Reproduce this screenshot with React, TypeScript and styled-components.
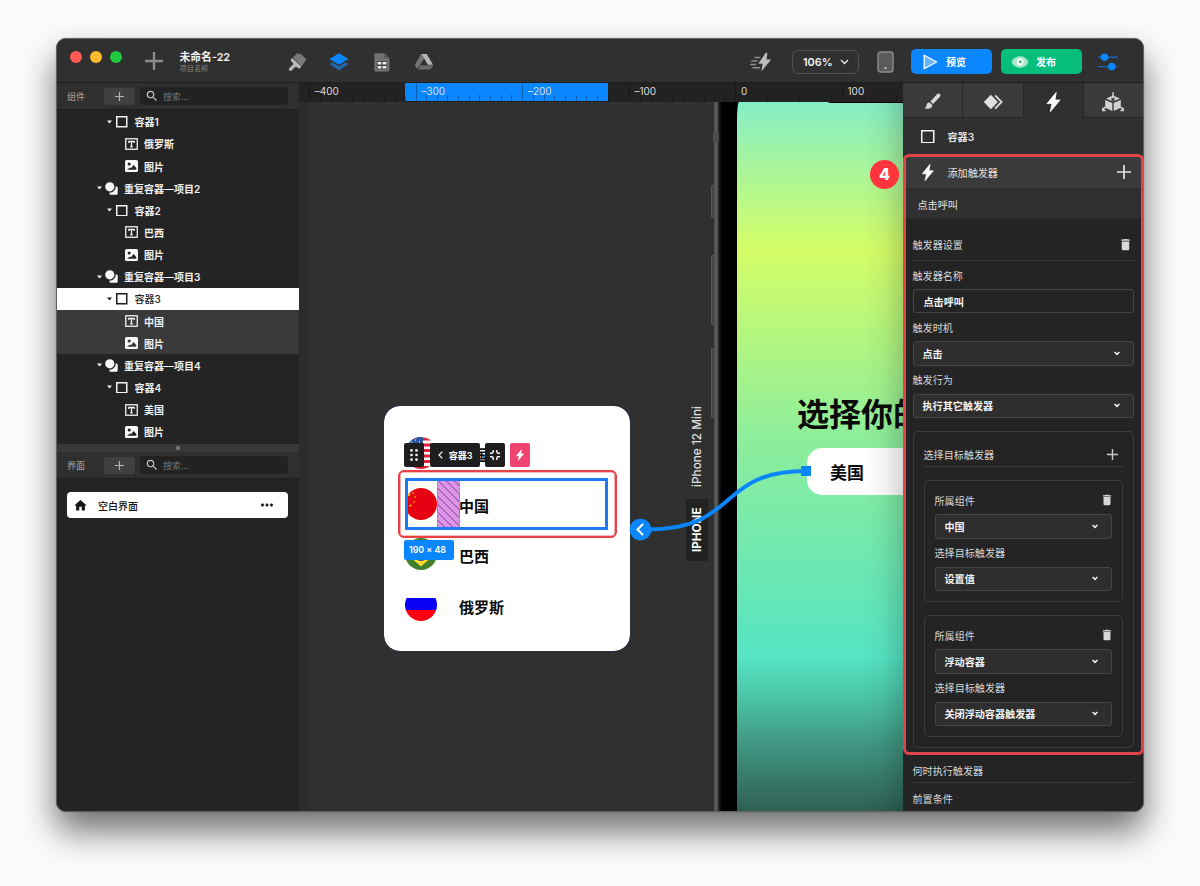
import React from "react";
import styled, { createGlobalStyle, css } from "styled-components";
import { MdDelete, MdHome, MdSearch, MdMoreHoriz } from "react-icons/md";

const GlobalStyle = createGlobalStyle`
  * { box-sizing: border-box; }
  body {
    margin: 0;
    background: #fbfbfb;
    font-family: Inter, "Noto Sans CJK SC", sans-serif;
    font-size: 10px;
    color: #e6e6e6;
    overflow: hidden;
  }
  svg { display: block; flex: none; }
`;

/* ---------- window shell ---------- */

const Page = styled.main`
  width: 1200px;
  height: 886px;
  padding: 38px 56px;
`;

const Shell = styled.div`
  position: relative;
  width: 1088px;
  height: 774px;
`;

const Window = styled.div`
  display: flex;
  flex-direction: column;
  width: 100%;
  height: 100%;
  border: 1px solid #606060;
  border-radius: 10px;
  overflow: hidden;
  background: #242424;
  box-shadow: 0 0 1px rgba(0, 0, 0, 0.5), 0 19px 34px rgba(0, 0, 0, 0.56);
`;

const Body = styled.div`
  display: flex;
  flex: 1;
  min-height: 0;
`;

/* ---------- top bar ---------- */

const TopBar = styled.header`
  display: flex;
  align-items: center;
  height: 44px;
  padding-left: 13px;
  background: #303030;
  border-bottom: 1px solid #1d1d1d;
`;

const Lights = styled.div`
  display: flex;
  gap: 8px;
  height: 12px;
  margin-top: -7px;
`;

const Light = styled.span<{ $color: string }>`
  width: 12px;
  height: 12px;
  border-radius: 50%;
  background: ${(p) => p.$color};
`;

const AddProject = styled.div`
  margin: 1px 0 0 22.5px;
`;

const Titles = styled.div`
  display: flex;
  flex-direction: column;
  width: 106px;
  margin: 3px 0 0 17px;
`;

const Title = styled.strong`
  font-size: 10.8px;
  line-height: 13px;
  font-weight: 600;
  color: #f2f2f2;
`;

const Subtitle = styled.span`
  font-size: 7.2px;
  line-height: 10px;
  color: #858585;
`;

const ModeIcons = styled.nav`
  display: flex;
  gap: 20.6px;
  margin-top: 2px;
`;

const Actions = styled.div`
  display: flex;
  align-items: center;
  margin: 2px 24px 0 auto;
`;

const ZoomSelect = styled.div`
  display: flex;
  align-items: center;
  justify-content: space-between;
  width: 67px;
  height: 24px;
  margin: 0 18px 0 20px;
  padding: 0 9px 0 10px;
  border: 1px solid #505050;
  border-radius: 6px;
  font-size: 10.9px;
  font-weight: 600;
  color: #f4f4f4;
`;

const ActionButton = styled.button<{ $color: string }>`
  display: flex;
  align-items: center;
  width: 81px;
  height: 25px;
  margin: 0 0 0 9px;
  padding: 0 0 0 10px;
  gap: 7px;
  border: 0;
  border-radius: 5px;
  background: ${(p) => p.$color};
  color: #fff;
  font: 600 10px/14px Inter, "Noto Sans CJK SC", sans-serif;
`;

const Spacer = styled.span<{ $width: number }>`
  width: ${(p) => p.$width}px;
`;

/* ---------- left panel ---------- */

const Sidebar = styled.aside`
  display: flex;
  flex-direction: column;
  width: 242px;
  background: #242424;
`;

const SearchBar = styled.div<{ $height: number }>`
  display: flex;
  align-items: center;
  height: ${(p) => p.$height}px;
  padding: 0 11px 0 10px;
  background: #2f2f2f;
  border-bottom: 1px solid #1d1d1d;
  font-size: 9px;
  color: #a6a6a6;
`;

const SearchLabel = styled.span`
  width: 37px;
  padding-top: 1px;
`;

const AddButton = styled.div`
  display: grid;
  place-items: center;
  width: 31px;
  height: 17px;
  border-radius: 3px;
  background: #404040;
`;

const SearchField = styled.div`
  display: flex;
  align-items: center;
  gap: 4px;
  flex: 1;
  height: 18px;
  margin-left: 5px;
  padding-left: 5px;
  border-radius: 4px;
  background: #222;
  color: #757575;
`;

const Tree = styled.div`
  display: flex;
  flex-direction: column;
  height: 334px;
  padding-top: 0.7px;
`;

type Tone = "plain" | "selected" | "inside";

const TreeRow = styled.div<{ $indent: number; $tone: Tone }>`
  display: flex;
  align-items: center;
  height: 22.15px;
  flex: none;
  padding-left: ${(p) => p.$indent}px;
  font-weight: 600;
  color: #f2f2f2;
  ${(p) => p.$tone === "selected" && css`background: #fff; color: #1d1d1d; font-weight: 500;`}
  ${(p) => p.$tone === "inside" && css`background: #3a3a3a;`}
`;

const TreeIcon = styled.span<{ $gap: number; $lead: number }>`
  margin: 0 ${(p) => p.$gap}px 0 ${(p) => p.$lead}px;
`;

const Splitter = styled.div`
  display: grid;
  place-items: center;
  height: 8px;
  background: #383838;
  &::after {
    content: "";
    width: 4px;
    height: 4px;
    border-radius: 50%;
    background: #7d7d7d;
  }
`;

const ScreenCard = styled.div`
  display: flex;
  align-items: center;
  height: 26px;
  margin: 13px 11px 0 10px;
  padding: 0 12px 0 6px;
  border-radius: 4px;
  background: #fff;
  color: #161616;
  font-weight: 500;
`;

const ScreenName = styled.span`
  flex: 1;
  margin-left: 10px;
`;

/* ---------- canvas ---------- */

const Stage = styled.section`
  display: flex;
  flex-direction: column;
  width: 604px;
  background: #303030;
`;

const Ruler = styled.div`
  position: relative;
  display: flex;
  height: 19px;
  padding-left: 10.3px;
  background: #222;
  overflow: hidden;
`;

const RulerRange = styled.div`
  position: absolute;
  left: 106px;
  top: 0;
  width: 203px;
  height: 18px;
  background: #0a87ff;
`;

const RulerUnit = styled.div`
  position: relative;
  flex: none;
  width: 106.55px;
  height: 18px;
  padding-left: 4.5px;
  border-left: 1px solid rgba(0, 0, 0, 0.3);
  font-size: 10px;
  line-height: 17px;
  color: #dcdcdc;
  &::after {
    content: "";
    position: absolute;
    left: 9.6px;
    right: 0;
    bottom: 0;
    height: 6px;
    background: repeating-linear-gradient(90deg, rgba(0, 0, 0, 0.28) 0 1px, transparent 1px 10.65px);
  }
`;

const Canvas = styled.div`
  position: relative;
  flex: 1;
  overflow: hidden;
  background: linear-gradient(90deg, #2c2c2c 0 10px, #303030 10px);
`;

const Placed = styled.div<{ $x: number; $y: number; $w: number; $h: number }>`
  position: absolute;
  left: ${(p) => p.$x}px;
  top: ${(p) => p.$y}px;
  width: ${(p) => p.$w}px;
  height: ${(p) => p.$h}px;
`;

const PhoneBody = styled(Placed)`
  background: linear-gradient(90deg, #444446 0, #59595c 1px, #5c5c60 3px, #1c1c1c 5px, #000 8px);
`;

const PhoneKey = styled(Placed)`
  border: 1px solid #5a5a5c;
  border-right: 0;
  border-radius: 2px 0 0 2px;
  background: #454547;
`;

const Antenna = styled(Placed)`
  background: #4c4c4e;
`;

const PhoneScreen = styled(Placed)`
  border-top-left-radius: 2px 18px;
  overflow: hidden;
  background: linear-gradient(180deg, #85eec6 0, #d4fe67 147px, #8eee9b 335px, #55e4c3 556px, #4bc7a8 593px, #409680 643px, #2f6256 706px);
`;

const Notch = styled(Placed)`
  background: #000;
  border-bottom-left-radius: 3px 1px;
`;

const PhoneHeading = styled(Placed)`
  font-size: 32px;
  line-height: 42px;
  font-weight: 700;
  white-space: nowrap;
  color: #0a0a0a;
`;

const CountryPill = styled(Placed)`
  display: flex;
  align-items: center;
  padding-left: 23px;
  border-radius: 15px 0 0 15px;
  background: #fff;
  color: #0a0a0a;
  font-size: 17px;
  font-weight: 700;
`;

const EdgeShade = styled(Placed)`
  background: linear-gradient(90deg, transparent, rgba(0, 0, 0, 0.04) 50%, rgba(0, 0, 0, 0.16));
`;

const VerticalText = styled(Placed)<{ $bold?: boolean }>`
  display: flex;
  align-items: center;
  justify-content: center;
  writing-mode: vertical-rl;
  transform: rotate(180deg);
  white-space: nowrap;
  font-size: ${(p) => (p.$bold ? 11.7 : 11.8)}px;
  font-weight: ${(p) => (p.$bold ? 700 : 500)};
  color: ${(p) => (p.$bold ? "#fff" : "#e0e0e0")};
  background: ${(p) => (p.$bold ? "#222" : "transparent")};
`;

const PickerCard = styled(Placed)`
  display: flex;
  flex-direction: column;
  padding: 23px 21px 0;
  border-radius: 16px;
  background: #fff;
  outline: 1px solid #273243;
`;

const CountryRow = styled.div`
  display: flex;
  align-items: center;
  gap: 22px;
  height: 50.8px;
  flex: none;
  color: #0a0a0a;
  font-size: 15px;
  font-weight: 700;
  > svg { margin-bottom: 3px; }
`;

const SelectionBox = styled(Placed)`
  border: 3px solid #187bf2;
`;

const GapStripes = styled(Placed)`
  border: 1px dashed #b273c6;
  border-width: 0 1px;
  background: repeating-linear-gradient(45deg, #dc95e6 0 4.6px, #a868bb 4.6px 5.7px);
`;

const HintFrame = styled(Placed)`
  border: 2px solid #ea4147;
  border-radius: 6px;
  box-shadow: inset 0 0 0 0.6px rgba(234, 65, 71, 0.7);
`;

const SizeTag = styled(Placed)`
  padding-left: 5px;
  border-radius: 2px;
  background: #0a87ff;
  color: #fff;
  font-size: 8.8px;
  line-height: 20px;
  font-weight: 600;
`;

const FloatingTools = styled(Placed)`
  display: flex;
`;

const Tool = styled.div<{ $width: number; $gap: number; $pink?: boolean }>`
  display: flex;
  align-items: center;
  justify-content: center;
  gap: 6px;
  width: ${(p) => p.$width}px;
  height: 24px;
  margin-right: ${(p) => p.$gap}px;
  border-radius: 2px;
  background: ${(p) => (p.$pink ? "#ef4470" : "#1e1e1e")};
  color: #fff;
  font-size: 9px;
  font-weight: 600;
`;

const Wires = styled.svg`
  position: absolute;
  inset: 0;
`;

/* ---------- right panel ---------- */

const Inspector = styled.aside`
  display: flex;
  flex-direction: column;
  width: 240px;
  background: #242424;
  font-size: 10.1px;
`;

const Tabs = styled.div`
  display: flex;
  height: 35px;
  flex: none;
`;

const Tab = styled.div<{ $active?: boolean }>`
  display: grid;
  place-items: center;
  flex: 1;
  padding-top: 3px;
  border-right: 1px solid #262626;
  border-bottom: 1px solid ${(p) => (p.$active ? "#303030" : "#262626")};
  background: ${(p) => (p.$active ? "#303030" : "#3a3a3a")};
  &:last-child { border-right: 0; }
`;

const InspectorRow = styled.div<{ $height: number; $bg: string; $left: number }>`
  display: flex;
  align-items: center;
  height: ${(p) => p.$height}px;
  flex: none;
  padding: 1px 12px 0 ${(p) => p.$left}px;
  border-bottom: 1px solid #2a2a2a;
  background: ${(p) => p.$bg};
  color: #e2e2e2;
`;

const RowTitle = styled.span<{ $bold?: boolean }>`
  flex: 1;
  margin-left: 13px;
  font-weight: ${(p) => (p.$bold ? 600 : 400)};
`;

const Form = styled.div`
  display: flex;
  flex-direction: column;
  padding: 10px 9px 0 9.5px;
`;

const SectionHead = styled.div<{ $height: number; $right?: number }>`
  display: flex;
  align-items: center;
  justify-content: space-between;
  height: ${(p) => p.$height}px;
  flex: none;
  padding-right: ${(p) => p.$right ?? 0}px;
  border-bottom: 1px solid #383838;
  color: #d6d6d6;
`;

const FooterTitle = styled.span`
  margin-top: 10px;
`;

const FieldLabel = styled.div<{ $height: number }>`
  display: flex;
  align-items: center;
  justify-content: space-between;
  height: ${(p) => p.$height}px;
  color: #d6d6d6;
`;

const Control = styled.div<{ $input?: boolean }>`
  display: flex;
  align-items: center;
  justify-content: space-between;
  height: 24.4px;
  padding: 0 13px 0 ${(p) => (p.$input ? 10 : 9)}px;
  border: 1px solid #464646;
  border-radius: 3px;
  background: ${(p) => (p.$input ? "#242424" : "#2e2e2e")};
  color: #f4f4f4;
  font-weight: 600;
`;

const Group = styled.div`
  display: flex;
  flex-direction: column;
  height: 317px;
  margin-top: 13px;
  padding: 10px 10px 0;
  border: 1px solid #3d3d3d;
  border-radius: 5px;
`;

const TargetCard = styled.div`
  height: 122px;
  margin-top: 13px;
  padding: 5px 10px 0;
  border: 1px solid #3d3d3d;
  border-radius: 5px;
  svg[data-role="remove"] { margin-right: -2px; }
`;

const Annotation = styled.div`
  position: absolute;
  left: 847px;
  top: 116px;
  width: 241px;
  height: 601px;
  border: 3px solid #e2444a;
  border-radius: 6px;
`;

const Step = styled.div`
  position: absolute;
  left: 814px;
  top: 122px;
  width: 29px;
  height: 29px;
  border-radius: 50%;
  background: #ff343c;
  color: #fff;
  font-size: 16px;
  line-height: 29px;
  font-weight: 800;
  text-align: center;
`;

/* ---------- drawings ---------- */

const Plus = ({ size, weight, color }: { size: number; weight: number; color: string }) => (
  <svg width={size} height={size} viewBox={`0 0 ${size} ${size}`} stroke={color} strokeWidth={weight}>
    <path d={`M${size / 2} 0V${size}M0 ${size / 2}H${size}`} />
  </svg>
);

const Bolt = ({ w, h, color = "#fff" }: { w: number; h: number; color?: string }) => (
  <svg width={w} height={h} viewBox="0 0 14 20" fill={color}>
    <path d="M9.7.4.5 11.6h5L3.8 19.7 13.6 8H8.5z" stroke={color} strokeWidth=".8" strokeLinejoin="round" />
  </svg>
);

const Caret = ({ color }: { color: string }) => (
  <svg width="5" height="4" viewBox="0 0 5 4" fill={color}>
    <path d="M0 .6h5L2.5 3.6z" />
  </svg>
);

const Chevron = () => (
  <svg width="6" height="5" viewBox="0 0 6 5" fill="none" stroke="#f0f0f0" strokeWidth="1.5">
    <path d="M.6 1 3 3.4 5.4 1" />
  </svg>
);

const Box = ({ size, color }: { size: number; color: string }) => (
  <svg width={size} height={size} viewBox={`0 0 ${size} ${size}`}>
    <rect x=".75" y=".75" width={size - 1.5} height={size - 1.5} fill="none" stroke={color} strokeWidth="1.5" />
  </svg>
);

const TextIcon = () => (
  <svg width="13" height="12" viewBox="0 0 13 12" fill="none" stroke="#f2f2f2">
    <rect x=".75" y=".75" width="11.5" height="10.5" strokeWidth="1.3" />
    <path d="M3.8 5V3.5h5.4V5M6.500 3.500v5.300M5.200 8.800h2.600" strokeWidth="1.300" />
  </svg>
);

const ImageIcon = ({ bg }: { bg: string }) => (
  <svg width="13" height="12" viewBox="0 0 13 12">
    <rect width="13" height="12" rx="1.5" fill="#f8f8f8" />
    <circle cx="4.2" cy="4" r="1.6" fill={bg} />
    <path d="M2 9.8 5 7.6l1 .6 2.6-3.1 2.7 2.8v1.9z" fill={bg} />
  </svg>
);

const RepeatIcon = () => (
  <svg width="13" height="13" viewBox="0 0 13 13" fill="#f6f6f6">
    <circle cx="4.8" cy="4.8" r="4.6" />
    <path d="M10.7 4.4h.8a1.2 1.2 0 0 1 1.2 1.2v5.9a1.2 1.2 0 0 1-1.2 1.2H5.6a1.2 1.2 0 0 1-1.2-1.2v-.8a6 6 0 0 0 6.3-6.3z" />
  </svg>
);

const BrushMode = () => (
  <svg width="22" height="22" viewBox="0 0 22 22">
    <path d="M6.800 6.600 11.600 2l2 1.600 1.200-.8 5.600 5.600-4.800 6.800z" fill="#7a7a7a" />
    <path d="m5.800 6.800 9.600 8.600-2.200 2.300-3.300-2.300-4.400 4.100a1.600 1.600 0 0 1-2.300-2.200l4.300-4.300-2.700-3.600z" fill="#bababa" />
  </svg>
);

const LayersMode = () => (
  <svg width="22" height="22" viewBox="0 0 22 22">
    <path d="m1.500 13 3.200-1.600L11 15.200l6.300-3.800 3.200 1.600L11 19.400z" fill="#2267ad" />
    <path d="M11 2.200 20.600 8 11 13.800 1.400 8z" fill="#0a87ff" />
  </svg>
);

const SheetMode = () => (
  <svg width="22" height="22" viewBox="0 0 22 22">
    <path d="M4.400 2.200h9l5 4.800v12.400a1 1 0 0 1-1 1h-13a1 1 0 0 1-1-1V3.200a1 1 0 0 1 1-1z" fill="#727272" />
    <path d="M13.400 2.200V7h5z" fill="#555" />
    <path d="M5.800 10.200h10.200v8H5.800z" fill="#3c3c3c" />
    <path d="M6.600 11h3.800v2.600H6.600zM11.600 11h3.800v2.600h-3.800zM6.600 14.900h3.800v2.500H6.600zM11.600 14.900h3.800v2.500h-3.800z" fill="#f0f0f0" />
  </svg>
);

const DriveMode = () => (
  <svg width="22" height="22" viewBox="0 0 22 22">
    <path d="M8 3h3l1 3.600-7.600 11.500-2.600-4.200z" fill="#747474" />
    <path d="M8.600 3h5.200l6.200 10.800h-5.200z" fill="#b4b4b4" />
    <path d="M7.800 14.300h12.400l-2.800 4.200H5z" fill="#686868" />
  </svg>
);

const FastBolt = () => (
  <svg width="22" height="20" viewBox="0 0 22 20">
    <path d="M15.800.8 8.200 11.800h4.400l-1.200 7.600L21.200 7.400h-4.700L17.400.8z" fill="#bcbcbc" />
    <path d="M5 5.600h4.800M1.800 9h5.400M.8 12.400h4.600M3 15.800h6.600" stroke="#8f8f8f" strokeWidth="1.500" strokeLinecap="round" />
  </svg>
);

const Tablet = () => (
  <svg width="17" height="22" viewBox="0 0 17 22">
    <rect x="1" y="1" width="15" height="20" rx="2.600" fill="#5a5a5c" stroke="#8d8d8d" strokeWidth="1.400" />
    <circle cx="8.500" cy="17.200" r="1.100" fill="#c9c9c9" />
  </svg>
);

const PlayIcon = () => (
  <svg width="18" height="16" viewBox="0 0 18 16">
    <path d="M3.200 1.200v13.600L15.600 8z" fill="#66b4ff" stroke="#fff" strokeWidth="1.300" strokeLinejoin="round" />
  </svg>
);

const EyeIcon = () => (
  <svg width="18" height="14" viewBox="0 0 18 14">
    <path d="M.5 7C3.500-.6 14.500-.6 17.500 7 14.500 14.600 3.500 14.600.5 7z" fill="#a7e6cd" />
    <circle cx="9" cy="7" r="3.400" fill="#fff" />
    <circle cx="9.300" cy="6.800" r="1.400" fill="#07bd7c" />
  </svg>
);

const Sliders = () => (
  <svg width="22" height="18" viewBox="0 0 22 18" fill="#0a87ff">
    <path d="M1 4.200h20M1 13.600h20" stroke="#1668b8" strokeWidth="1.400" />
    <circle cx="7.600" cy="4.200" r="3.800" />
    <circle cx="14.800" cy="13.600" r="3.800" />
  </svg>
);

const BrushTab = () => (
  <svg width="17" height="17" viewBox="0 0 18 18" fill="#d6d6d6">
    <path d="M16.900 1.100c-.9-.9-2.200-.7-3.200.3L6.900 9l2.700 2.600 7.100-7.400c.9-.9 1.100-2.200.2-3.100z" />
    <path d="M5.900 10 8.800 12.700c.2 3-2.800 4.800-8.300 3.700 2-1 1.700-2.100 2-3.500.3-1.800 1.800-3 3.400-2.900z" />
  </svg>
);

const DiamondTab = () => (
  <svg width="20" height="16" viewBox="0 0 20 16">
    <path d="m7.800.8 7 7.200-7 7.200L.8 8z" fill="#e0e0e0" />
    <path d="m12.100 1.400 6.500 6.600-6.500 6.600" fill="none" stroke="#dadada" strokeWidth="1.900" />
  </svg>
);

const CubeTab = () => (
  <svg width="22" height="20" viewBox="0 0 22 20" fill="#d2d2d2">
    <path d="M11 3.600 18 6.600l-7 3-7-3z" />
    <path d="M3.200 7.900 10.300 11v8L3.200 15.700zM18.800 7.900 11.700 11v8l7.100-3.300z" />
    <path d="M11 5.600V9" fill="none" stroke="#3a3a3a" strokeWidth="3" />
    <path d="M11 .2v6M3.600 14.800.8 17.800M18.400 14.800l2.800 3M.8 15.800v2.600h2.800M21.200 15.800v2.600h-2.800" fill="none" stroke="#d2d2d2" strokeWidth="1.500" />
  </svg>
);

const DragDots = () => (
  <svg width="8" height="12" viewBox="0 0 8 12" fill="#fff">
    {[1.400, 6, 10.600].map((y) => (
      <React.Fragment key={y}>
        <circle cx="1.500" cy={y} r="1.300" />
        <circle cx="6.500" cy={y} r="1.300" />
      </React.Fragment>
    ))}
  </svg>
);

const BackChevron = () => (
  <svg width="5" height="8" viewBox="0 0 5 8" fill="none" stroke="#fff" strokeWidth="1.200">
    <path d="M4.300.6 1 4l3.300 3.400" />
  </svg>
);

const ShrinkIcon = () => (
  <svg width="10" height="10" viewBox="0 0 10 10" fill="none" stroke="#fff" strokeWidth="1.400">
    <path d="M3.200 0v1.800a1.400 1.400 0 0 1-1.400 1.400H0M6.800 0v1.800a1.400 1.400 0 0 0 1.400 1.400H10M3.200 10V8.200a1.400 1.400 0 0 0-1.400-1.400H0M6.800 10V8.200a1.400 1.400 0 0 1 1.400-1.400H10" />
  </svg>
);

const Star = ({ x, y, r }: { x: number; y: number; r: number }) => (
  <path d={`M${x} ${y - r}l${r * 0.3} ${r * 0.7}h${r * 0.7}l${-r * 0.6} ${r * 0.5}l${r * 0.3} ${r * 0.8}l${-r * 0.7} ${-r * 0.5}l${-r * 0.7} ${r * 0.5}l${r * 0.3} ${-r * 0.8}l${-r * 0.6} ${-r * 0.5}h${r * 0.7}z`} fill="#ffde00" />
);

const Flag = ({ code }: { code: string }) => (
  <svg width="32" height="32" viewBox="0 0 32 32">
    <defs>
      <clipPath id={`round-${code}`}>
        <circle cx="16" cy="16" r="16" />
      </clipPath>
    </defs>
    <g clipPath={`url(#round-${code})`}>
      {code === "us" && (
        <>
          <rect width="32" height="32" fill="#fff" />
          <path d="M0 2h32M0 8h32M0 13.500h32M0 19h32M0 24.500h32M0 30.500h32" stroke="#e0203a" strokeWidth="2.900" />
          <rect width="18" height="17" fill="#2c56a0" />
          <path d="M6 5h1M10 3h1M14 5h1M10 7h1M5 9h1M14 9h1" stroke="#fff" strokeWidth="1" />
        </>
      )}
      {code === "cn" && (
        <>
          <rect width="32" height="32" fill="#e60012" />
          <Star x={4} y={6.500} r={2} />
          <Star x={8} y={5} r={1.200} />
          <Star x={10} y={9} r={1.200} />
          <Star x={9} y={14} r={1.200} />
          <Star x={5.500} y={17.500} r={1.400} />
        </>
      )}
      {code === "br" && (
        <>
          <rect width="32" height="32" fill="#3f7f2e" />
          <path d="m16 3 14 13-14 12.500L2 16z" fill="#ffd92e" />
          <circle cx="16" cy="16" r="7" fill="#20468c" />
        </>
      )}
      {code === "ru" && (
        <>
          <rect width="32" height="32" fill="#fff" />
          <rect y="9" width="32" height="12" fill="#0a00f5" />
          <rect y="21" width="32" height="11" fill="#fa0010" />
        </>
      )}
    </g>
  </svg>
);

/* ---------- data ---------- */

type NodeKind = "box" | "text" | "image" | "repeat";
const nodes: { kind: NodeKind; name: string; tone?: Tone }[] = [
  { kind: "box", name: "容器1" },
  { kind: "text", name: "俄罗斯" },
  { kind: "image", name: "图片" },
  { kind: "repeat", name: "重复容器—项目2" },
  { kind: "box", name: "容器2" },
  { kind: "text", name: "巴西" },
  { kind: "image", name: "图片" },
  { kind: "repeat", name: "重复容器—项目3" },
  { kind: "box", name: "容器3", tone: "selected" },
  { kind: "text", name: "中国", tone: "inside" },
  { kind: "image", name: "图片", tone: "inside" },
  { kind: "repeat", name: "重复容器—项目4" },
  { kind: "box", name: "容器4" },
  { kind: "text", name: "美国" },
  { kind: "image", name: "图片" },
];

const metrics: Record<NodeKind, { indent: number; lead: number; gap: number }> = {
  repeat: { indent: 40, lead: 3, gap: 6 },
  box: { indent: 50, lead: 4, gap: 7 },
  text: { indent: 64, lead: 4, gap: 6 },
  image: { indent: 64, lead: 4, gap: 6 },
};

const countries = [
  { code: "us", name: "美国" },
  { code: "cn", name: "中国" },
  { code: "br", name: "巴西" },
  { code: "ru", name: "俄罗斯" },
];

const targets = [
  { component: "中国", trigger: "设置值" },
  { component: "浮动容器", trigger: "关闭浮动容器触发器" },
];

/* ---------- parts ---------- */

const TreeNode = ({ kind, name, tone = "plain" }: { kind: NodeKind; name: string; tone?: Tone }) => {
  const ink = tone === "selected" ? "#1d1d1d" : "#f2f2f2";
  const { indent, lead, gap } = metrics[kind];
  return (
    <TreeRow $indent={indent} $tone={tone}>
      {(kind === "box" || kind === "repeat") && <Caret color={ink} />}
      <TreeIcon $gap={gap} $lead={lead}>
        {kind === "box" && <Box size={11.500} color={ink} />}
        {kind === "repeat" && <RepeatIcon />}
        {kind === "text" && <TextIcon />}
        {kind === "image" && <ImageIcon bg={tone === "inside" ? "#3a3a3a" : "#242424"} />}
      </TreeIcon>
      {name}
    </TreeRow>
  );
};

const PanelSearch = ({ label, height }: { label: string; height: number }) => (
  <SearchBar $height={height}>
    <SearchLabel>{label}</SearchLabel>
    <AddButton>
      <Plus size={9} weight={1.200} color="#b5b5b5" />
    </AddButton>
    <SearchField>
      <MdSearch size={14} color="#c4c4c4" />
      搜索...
    </SearchField>
  </SearchBar>
);

const SelectBox = ({ value }: { value: string }) => (
  <Control>
    {value}
    <Chevron />
  </Control>
);

export default function App() {
  return (
    <Page>
      <GlobalStyle />
      <Shell>
        <Window>
          <TopBar>
            <Lights>
              <Light $color="#ff5b52" />
              <Light $color="#fdbb2d" />
              <Light $color="#20cb3e" />
            </Lights>
            <AddProject>
              <Plus size={18} weight={2.400} color="#8d8d8d" />
            </AddProject>
            <Titles>
              <Title>未命名-22</Title>
              <Subtitle>项目名称</Subtitle>
            </Titles>
            <ModeIcons>
              <BrushMode />
              <LayersMode />
              <SheetMode />
              <DriveMode />
            </ModeIcons>
            <Actions>
              <FastBolt />
              <ZoomSelect>
                106%
                <svg width="9" height="6" viewBox="0 0 9 6" fill="none" stroke="#eee" strokeWidth="1.300">
                  <path d="m1 1 3.500 3.500L8 1" />
                </svg>
              </ZoomSelect>
              <Tablet />
              <Spacer $width={8} />
              <ActionButton $color="#0a87ff">
                <PlayIcon />
                预览
              </ActionButton>
              <ActionButton $color="#07bd7c">
                <EyeIcon />
                发布
              </ActionButton>
              <Spacer $width={15} />
              <Sliders />
            </Actions>
          </TopBar>
          <Body>
            <Sidebar>
              <PanelSearch label="组件" height={27} />
              <Tree>
                {nodes.map((node, i) => (
                  <TreeNode key={i} {...node} />
                ))}
              </Tree>
              <Splitter />
              <PanelSearch label="界面" height={27} />
              <ScreenCard>
                <MdHome size={15} />
                <ScreenName>空白界面</ScreenName>
                <MdMoreHoriz size={18} />
              </ScreenCard>
            </Sidebar>

            <Stage>
              <Ruler>
                <RulerRange />
                {["–400", "–300", "–200", "–100", "0", "100"].map((mark) => (
                  <RulerUnit key={mark}>{mark}</RulerUnit>
                ))}
              </Ruler>
              <Canvas>
                <PhoneKey $x={412} $y={83} $w={3} $h={33} />
                <PhoneKey $x={412} $y={153} $w={3} $h={70} />
                <PhoneKey $x={412} $y={246} $w={3} $h={70} />
                <PhoneBody $x={415} $y={-1} $w={190} $h={711} />
                <Antenna $x={414} $y={30} $w={6} $h={10} />
                <PhoneScreen $x={438} $y={0} $w={166} $h={710}>
                  <Notch $x={91} $y={0} $w={80} $h={1} />
                  <PhoneHeading $x={60} $y={292} $w={180} $h={42}>
                    选择你的
                  </PhoneHeading>
                  <CountryPill $x={70} $y={346} $w={100} $h={47}>
                    美国
                  </CountryPill>
                  <EdgeShade $x={126} $y={0} $w={40} $h={710} />
                </PhoneScreen>
                <VerticalText $x={387} $y={299} $w={22} $h={90}>
                  iPhone 12 Mini
                </VerticalText>
                <VerticalText $x={387} $y={397} $w={22} $h={62} $bold>
                  IPHONE
                </VerticalText>

                <PickerCard $x={85} $y={304} $w={246} $h={245}>
                  {countries.map((c) => (
                    <CountryRow key={c.code}>
                      <Flag code={c.code} />
                      {c.name}
                    </CountryRow>
                  ))}
                </PickerCard>
                <GapStripes $x={138} $y={376} $w={23} $h={50} />
                <SelectionBox $x={106} $y={376} $w={203} $h={52} />
                <HintFrame $x={99} $y={368} $w={219} $h={68} />
                <FloatingTools $x={105} $y={341} $w={130} $h={24}>
                  <Tool $width={20} $gap={6}>
                    <DragDots />
                  </Tool>
                  <Tool $width={50} $gap={5}>
                    <BackChevron />
                    容器3
                  </Tool>
                  <Tool $width={20} $gap={5}>
                    <ShrinkIcon />
                  </Tool>
                  <Tool $width={20} $gap={0} $pink>
                    <Bolt w={8} h={12} />
                  </Tool>
                </FloatingTools>
                <SizeTag $x={105} $y={438} $w={50} $h={20}>
                  190 × 48
                </SizeTag>
                <Wires width="604" height="709" viewBox="299 102 604 709" fill="none">
                  <path d="M648 529.500C739 529.500 717 471 806 471" stroke="#0a87ff" strokeWidth="4" />
                  <rect x="801" y="466" width="10" height="10" fill="#0a87ff" />
                  <circle cx="640.500" cy="529.500" r="10.800" fill="#0a87ff" />
                  <path d="m643 524-5.500 5.500 5.500 5.500" stroke="#fff" strokeWidth="2" />
                </Wires>
              </Canvas>
            </Stage>

            <Inspector>
              <Tabs>
                <Tab>
                  <BrushTab />
                </Tab>
                <Tab>
                  <DiamondTab />
                </Tab>
                <Tab $active>
                  <Bolt w={15} h={20} />
                </Tab>
                <Tab>
                  <CubeTab />
                </Tab>
              </Tabs>
              <InspectorRow $height={37} $bg="#303030" $left={18}>
                <Box size={13.500} color="#f4f4f4" />
                <RowTitle $bold>容器3</RowTitle>
              </InspectorRow>
              <InspectorRow $height={34} $bg="#3a3a3a" $left={18}>
                <Bolt w={13.500} h={17} />
                <RowTitle>添加触发器</RowTitle>
                <Plus size={14} weight={1.700} color="#e2e2e2" />
              </InspectorRow>
              <InspectorRow $height={30} $bg="#303030" $left={14.500}>
                点击呼叫
              </InspectorRow>
              <Form>
                <SectionHead $height={32} $right={1}>
                  触发器设置
                  <MdDelete size={15} color="#d8d8d8" />
                </SectionHead>
                <FieldLabel $height={28}>触发器名称</FieldLabel>
                <Control $input>点击呼叫</Control>
                <FieldLabel $height={28}>触发时机</FieldLabel>
                <SelectBox value="点击" />
                <FieldLabel $height={28}>触发行为</FieldLabel>
                <SelectBox value="执行其它触发器" />
                <Group>
                  <SectionHead $height={25} $right={5}>
                    选择目标触发器
                    <Plus size={11} weight={1.400} color="#c8c8c8" />
                  </SectionHead>
                  {targets.map((t) => (
                    <TargetCard key={t.component}>
                      <FieldLabel $height={28}>
                        所属组件
                        <MdDelete size={14} color="#d8d8d8" data-role="remove" />
                      </FieldLabel>
                      <SelectBox value={t.component} />
                      <FieldLabel $height={28}>选择目标触发器</FieldLabel>
                      <SelectBox value={t.trigger} />
                    </TargetCard>
                  ))}
                </Group>
                <SectionHead $height={35}>
                  <FooterTitle>何时执行触发器</FooterTitle>
                </SectionHead>
                <FieldLabel $height={30}>前置条件</FieldLabel>
              </Form>
            </Inspector>
          </Body>
        </Window>
        <Annotation />
        <Step>4</Step>
      </Shell>
    </Page>
  );
}
